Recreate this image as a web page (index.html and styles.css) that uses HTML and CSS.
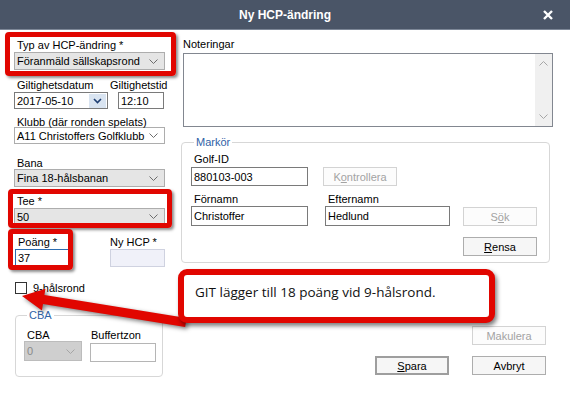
FILE: index.html
```html
<!DOCTYPE html>
<html lang="sv">
<head>
    <meta charset="UTF-8">
    <meta name="viewport" content="width=device-width, initial-scale=1.0">
    <title>Ny HCP-ändring</title>
    <link rel="stylesheet" href="styles.css">
</head>
<body>
    <div class="dialog">
        <div class="titlebar">
            <span></span>
            <span class="title">Ny HCP-ändring</span>
            <span class="close">
                <svg width="10" height="10" viewBox="0 0 10 10"><path d="M1 1 L9 9 M9 1 L1 9"/></svg>
            </span>
        </div>

        <div class="content">
            <div class="col-left">
                <div class="lbl lbl-typ">Typ av HCP-ändring *</div>
                <div class="combo grey combo-typ">
                    <span>Föranmäld sällskapsrond</span>
                    <svg class="chev" viewBox="0 0 9 5"><polyline points="0.5,0.5 4.5,4.5 8.5,0.5"/></svg>
                </div>

                <div class="row row-date">
                    <div class="field f-date">
                        <div class="lbl">Giltighetsdatum</div>
                        <div class="input date">
                            <span>2017-05-10</span>
                            <span class="dd"><svg viewBox="0 0 9 6"><polyline points="1,1 4.5,4.5 8,1"/></svg></span>
                        </div>
                    </div>
                    <div class="field f-time">
                        <div class="lbl nopad">Giltighetstid</div>
                        <div class="input time">12:10</div>
                    </div>
                </div>

                <div class="lbl lbl-klubb">Klubb (där ronden spelats)</div>
                <div class="combo combo-klubb">
                    <span>A11 Christoffers Golfklubb</span>
                    <svg class="chev" viewBox="0 0 9 5"><polyline points="0.5,0.5 4.5,4.5 8.5,0.5"/></svg>
                </div>

                <div class="lbl lbl-bana">Bana</div>
                <div class="combo grey combo-bana">
                    <span>Fina 18-hålsbanan</span>
                    <svg class="chev" viewBox="0 0 9 5"><polyline points="0.5,0.5 4.5,4.5 8.5,0.5"/></svg>
                </div>

                <div class="lbl lbl-tee">Tee *</div>
                <div class="combo grey combo-tee">
                    <span>50</span>
                    <svg class="chev" viewBox="0 0 9 5"><polyline points="0.5,0.5 4.5,4.5 8.5,0.5"/></svg>
                </div>

                <div class="row row-poang">
                    <div class="field f-poang">
                        <div class="lbl">Poäng *</div>
                        <div class="input focus">37</div>
                    </div>
                    <div class="field f-nyhcp">
                        <div class="lbl nopad">Ny HCP *</div>
                        <div class="input readonly"></div>
                    </div>
                </div>

                <div class="check-row">
                    <span class="checkbox"></span>
                    <span>9-hålsrond</span>
                </div>

                <fieldset class="group group-cba">
                    <legend>CBA</legend>
                    <div class="row row-cba">
                        <div class="field f-cba">
                            <div class="lbl">CBA</div>
                            <div class="combo disabled">
                                <span>0</span>
                                <svg class="chev" viewBox="0 0 9 5"><polyline points="0.5,0.5 4.5,4.5 8.5,0.5"/></svg>
                            </div>
                        </div>
                        <div class="field f-buffert">
                            <div class="lbl">Buffertzon</div>
                            <div class="input light"></div>
                        </div>
                    </div>
                </fieldset>
            </div>

            <div class="col-right">
                <div class="lbl lbl-noter">Noteringar</div>
                <div class="textarea">
                    <div class="scrollbar">
                        <svg viewBox="0 0 9 5"><polyline points="0.5,4.5 4.5,0.5 8.5,4.5"/></svg>
                        <svg viewBox="0 0 9 5"><polyline points="0.5,0.5 4.5,4.5 8.5,0.5"/></svg>
                    </div>
                </div>

                <fieldset class="group group-markor">
                    <legend>Markör</legend>
                    <div class="row row-golfid">
                        <div class="field f-golfid">
                            <div class="lbl">Golf-ID</div>
                            <div class="input tall">880103-003</div>
                        </div>
                        <button class="btn off btn-kontroll">K<u>o</u>ntrollera</button>
                    </div>
                    <div class="row row-namn">
                        <div class="field f-fornamn">
                            <div class="lbl">Förnamn</div>
                            <div class="input taller">Christoffer</div>
                        </div>
                        <div class="field f-efternamn">
                            <div class="lbl">Efternamn</div>
                            <div class="input taller">Hedlund</div>
                        </div>
                        <button class="btn off btn-sok">S<u>ö</u>k</button>
                    </div>
                    <div class="row row-rensa">
                        <button class="btn"><u>R</u>ensa</button>
                    </div>
                </fieldset>

                <div class="actions actions-makulera">
                    <button class="btn off">Makulera</button>
                </div>
                <div class="actions actions-main">
                    <button class="btn default"><u>S</u>para</button>
                    <button class="btn">Avbryt</button>
                </div>
            </div>
        </div>

        <!-- annotations drawn on top of the dialog -->
        <div class="hl hl-typ"></div>
        <div class="hl hl-tee"></div>
        <div class="hl hl-poang"></div>

        <svg class="arrow" width="570" height="393" viewBox="0 0 570 393">
            <g transform="translate(22 296) rotate(9.2)">
                <polygon points="0,0 22,-11 22,-4.5 166,-4.5 166,4.5 22,4.5 22,11"/>
            </g>
        </svg>

        <div class="callout">GIT lägger till 18 poäng vid 9-hålsrond.</div>
    </div>
</body>
</html>
```

FILE: styles.css
```css
* {
    box-sizing: border-box;
}

body {
    margin: 0;
    background: #fff;
    font-family: "Liberation Sans", Arial, sans-serif;
    font-size: 11px;
    color: #000;
}

.dialog {
    position: relative;
    width: 570px;
    height: 393px;
    overflow: hidden;
    background: #fff;
}

/* title bar */
.titlebar {
    height: 30px;
    background: #4a5567;
    border-bottom: 1px solid #7d8797;
    display: grid;
    grid-template-columns: 1fr auto 1fr;
    align-items: center;
    color: #fff;
}

.title {
    font-weight: bold;
    font-size: 12px;
}

.close {
    justify-self: end;
    padding-right: 17px;
    display: flex;
}

.close path {
    stroke: #fff;
    stroke-width: 2.4;
    fill: none;
}

/* layout */
.content {
    display: flex;
}

.col-left {
    margin-left: 14px;
    width: 151px;
}

.col-right {
    margin-left: 18px;
    width: 370px;
}

.row {
    display: flex;
}

.field {
    display: flex;
    flex-direction: column;
}

.lbl {
    line-height: 12px;
    height: 12px;
    padding-left: 3px;
    white-space: nowrap;
}

.lbl.nopad {
    padding-left: 0;
}

/* combo boxes */
.combo {
    display: flex;
    align-items: center;
    justify-content: space-between;
    border: 1px solid #adadad;
    background: #fff;
    padding: 0 6px 0 2px;
    white-space: nowrap;
}

.combo.grey {
    background: #e5e5e5;
}

.combo.disabled {
    background: #cfcfcf;
    border-color: #bcbcbc;
    color: #8a8a8a;
}

.chev {
    width: 9px;
    height: 5px;
    flex: none;
}

.chev polyline {
    fill: none;
    stroke: #6d6d6d;
    stroke-width: 1;
}

.combo.disabled .chev polyline {
    stroke: #a5a5a5;
}

/* text inputs */
.input {
    height: 17px;
    border: 1px solid #7a7a7a;
    background: #fff;
    padding-left: 2px;
    display: flex;
    align-items: center;
    white-space: nowrap;
}

.input.focus {
    border-color: #2b6cb0;
}

.input.readonly {
    background: #f0f1f9;
    border-color: #cfd2e0;
}

.input.light {
    border-color: #b5b5b5;
}

.input.tall {
    height: 19px;
}

.input.taller {
    height: 20px;
}

/* left column positions */
.lbl-typ {
    margin-top: 9px;
}

.combo-typ {
    margin-top: 1px;
    height: 18px;
}

.row-date {
    margin-top: 9px;
}

.f-date {
    width: 94px;
}

.input.date {
    margin-top: 1px;
    justify-content: space-between;
    padding-right: 1px;
}

.dd {
    width: 17px;
    height: 14px;
    background: #d9e4f1;
    display: flex;
    align-items: center;
    justify-content: center;
}

.dd svg {
    width: 9px;
    height: 6px;
}

.dd polyline {
    fill: none;
    stroke: #1f3f73;
    stroke-width: 1.6;
}

.f-time {
    margin-left: auto;
    width: 55px;
}

.input.time {
    margin-top: 1px;
    margin-left: 8px;
    width: 46px;
}

.lbl-klubb {
    margin-top: 7px;
}

.combo-klubb {
    margin-top: -1px;
    height: 17px;
}

.lbl-bana {
    margin-top: 13px;
}

.combo-bana {
    height: 18px;
}

.lbl-tee {
    margin-top: 8px;
}

.combo-tee {
    margin-top: 1px;
    height: 17px;
}

.row-poang {
    margin-top: 11px;
}

.f-poang {
    width: 55px;
    margin-left: 1px;
}

.f-poang .input {
    margin-top: 1px;
}

.f-nyhcp {
    margin-left: auto;
    width: 55px;
}

.f-nyhcp .input {
    margin-top: 1px;
    height: 18px;
}

.check-row {
    margin-top: 14px;
    margin-left: 1px;
    display: flex;
    align-items: center;
    gap: 6px;
    height: 13px;
}

.checkbox {
    width: 12px;
    height: 12px;
    border: 1px solid #333;
    background: #fff;
}

/* group boxes */
.group {
    margin: 0;
    padding: 0;
    border: 1px solid #d7d7d7;
    border-radius: 4px;
    min-width: 0;
}

.group legend {
    padding: 0 2px;
    margin-left: 3px;
    line-height: 12px;
    color: #2f62a6;
}

.group-cba {
    margin-top: 15px;
    margin-left: 1px;
    width: 148px;
    padding: 0 0 14px 8px;
}

.row-cba {
    margin-top: 8px;
}

.f-cba {
    width: 58px;
}

.f-cba .combo {
    height: 20px;
}

.f-buffert {
    margin-left: 8px;
    width: 66px;
}

.f-buffert .lbl {
    padding-left: 1px;
}

.f-buffert .input {
    margin-top: 2px;
    height: 19px;
}

/* right column */
.lbl-noter {
    margin-top: 8px;
    padding-left: 0;
}

.textarea {
    margin-top: 3px;
    height: 74px;
    border: 1px solid #828790;
    background: #fff;
    display: flex;
    justify-content: flex-end;
}

.scrollbar {
    width: 17px;
    background: #f0f0f0;
    display: flex;
    flex-direction: column;
    justify-content: space-between;
    align-items: center;
    padding: 7px 0;
}

.scrollbar svg {
    width: 9px;
    height: 5px;
}

.scrollbar polyline {
    fill: none;
    stroke: #a6a6a6;
    stroke-width: 1;
}

.group-markor {
    margin-top: 9px;
    margin-left: -2px;
    width: 369px;
    padding: 0 12px 6px 9px;
}

.row-golfid {
    margin-top: 5px;
    align-items: flex-end;
}

.f-golfid {
    width: 117px;
}

.f-golfid .input {
    margin-top: 2px;
}

.btn-kontroll {
    margin-left: 15px;
}

.row-namn {
    margin-top: 7px;
    align-items: flex-end;
}

.f-fornamn {
    width: 117px;
}

.f-fornamn .input,
.f-efternamn .input {
    margin-top: 1px;
}

.f-efternamn {
    margin-left: 17px;
    width: 125px;
}

.btn-sok {
    margin-left: 13px;
    height: 20px;
}

.row-rensa {
    margin-top: 11px;
    justify-content: flex-end;
}

/* buttons */
.btn {
    width: 74px;
    height: 19px;
    padding: 0;
    border: 1px solid #adadad;
    background: #f6f6f6;
    font-family: "Liberation Sans", Arial, sans-serif;
    font-size: 11px;
    color: #000;
}

.btn.off {
    border-color: #d3d3d3;
    background: #fcfcfc;
    color: #a3a3a3;
}

.btn.default {
    border: 2px solid #9e9e9e;
}

.actions {
    display: flex;
    justify-content: flex-end;
    gap: 23px;
    padding-right: 7px;
}

.actions-makulera {
    margin-top: 63px;
}

.actions-main {
    margin-top: 11px;
}

/* red annotations */
.hl {
    position: absolute;
    border: 5px solid #e10600;
    border-radius: 4px;
    box-shadow: 2px 2px 3px rgba(0, 0, 0, 0.45);
}

.hl-typ {
    left: 5px;
    top: 32px;
    width: 171px;
    height: 44px;
}

.hl-tee {
    left: 8px;
    top: 189px;
    width: 164px;
    height: 39px;
}

.hl-poang {
    left: 8px;
    top: 229px;
    width: 65px;
    height: 41px;
}

.arrow {
    position: absolute;
    left: 0;
    top: 0;
    pointer-events: none;
    filter: drop-shadow(2px 2px 2px rgba(0, 0, 0, 0.5));
}

.arrow polygon {
    fill: #e10600;
}

.callout {
    position: absolute;
    left: 178px;
    top: 269px;
    width: 317px;
    height: 54px;
    border: 6px solid #e10600;
    border-radius: 9px;
    background: #fff;
    box-shadow: 2px 3px 4px rgba(0, 0, 0, 0.5);
    padding: 7px 0 0 11px;
    font-family: "Open Sans", "Liberation Sans", sans-serif;
    font-size: 13.5px;
    line-height: 20px;
    color: #111;
}
```
